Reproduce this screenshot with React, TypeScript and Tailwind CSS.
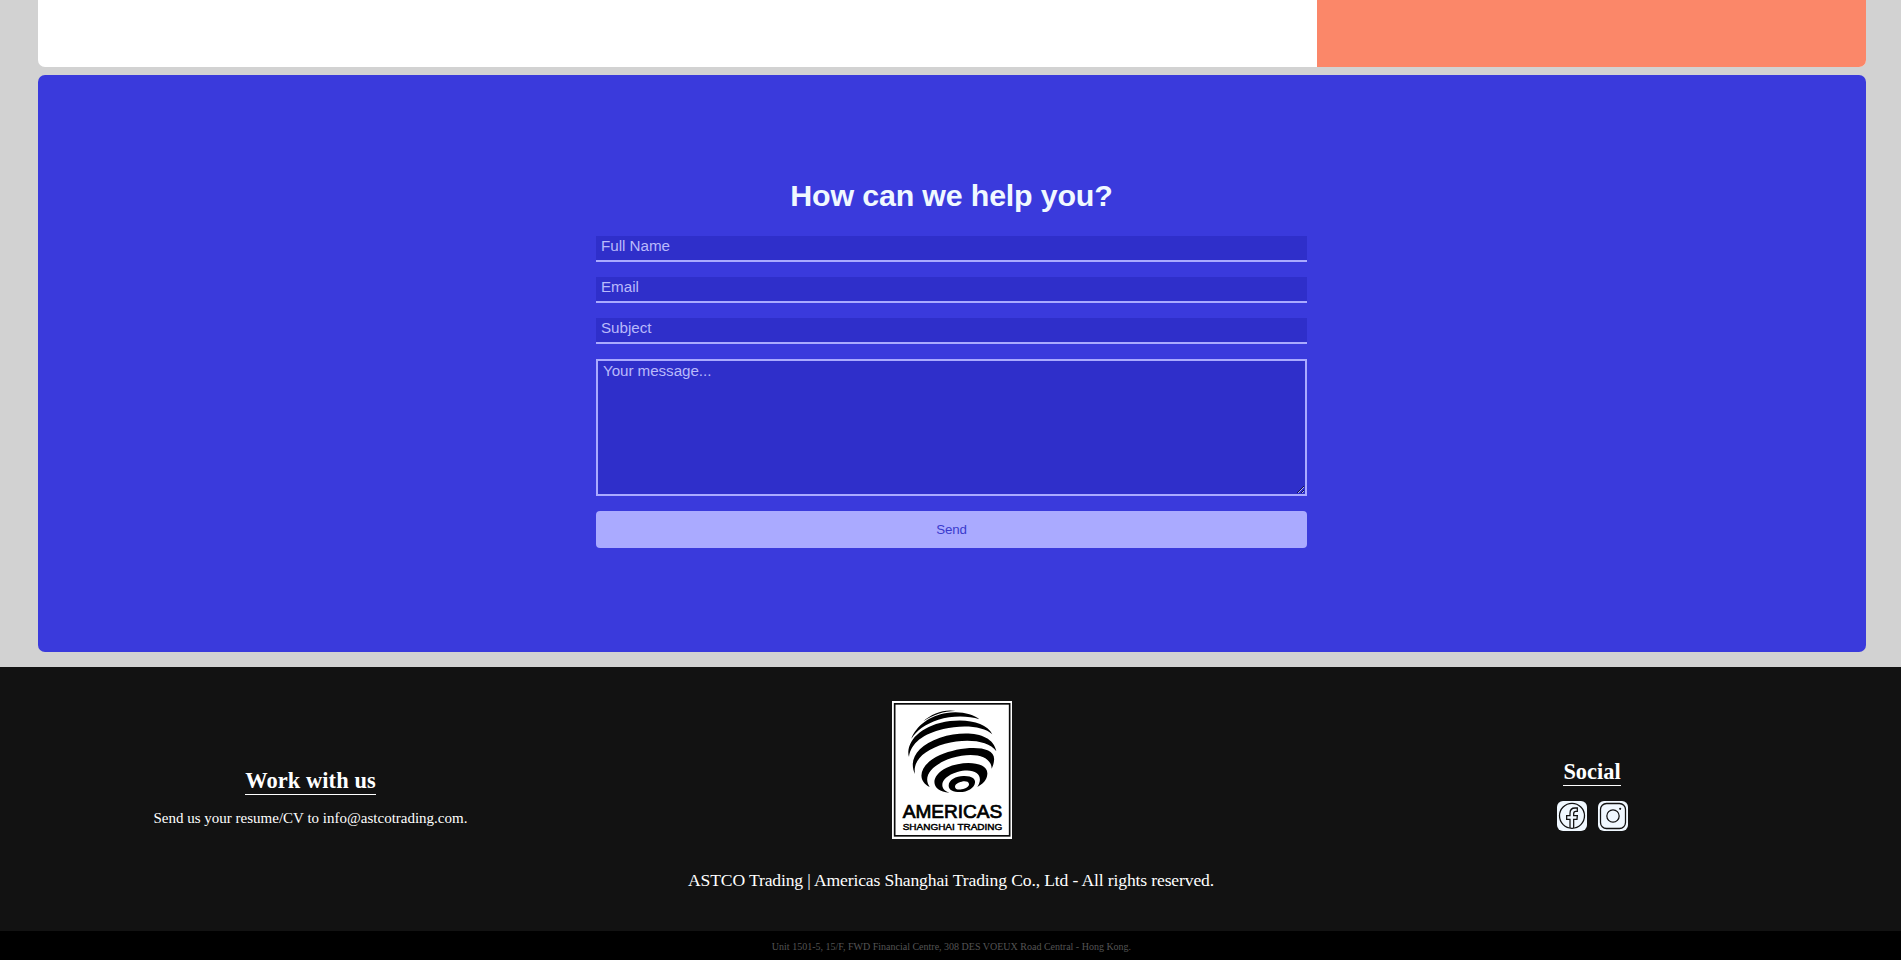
const fieldClass =
  "block h-[26px] w-full rounded-none border-b-2 border-[#aaaaff] bg-[#2f2fca] px-[5px] pt-0 pb-[6px] text-[15.2px] leading-[18px] tracking-[-0.03px] text-[#f0f8ff] placeholder:text-[#b9b9fb] outline-none";

function Logo() {
  return (
    <svg viewBox="36 33 360 414" className="h-[138px] w-[120px]" role="img">
      <rect x="36" y="33" width="360" height="414" fill="#fff" />
      <rect x="44" y="41.5" width="345" height="396" fill="none" stroke="#0a0a0a" strokeWidth="5" />
      <g fill="#000">
        <path d="M130 94C155 70 195 56 228 63C195 62 160 74 130 94Z" />
        <path d="M94 146C108 108 150 76 200 69C240 62 280 72 298 88C265 77 215 77 175 89C135 102 110 121 94 146Z" />
        <path d="M87 201C76 160 115 115 180 99C250 82 318 95 337 133C310 107 245 104 190 117C130 131 92 160 87 201Z" />
        <path d="M105 252C85 210 110 167 180 143C255 120 338 127 349 184C325 149 255 145 195 161C130 180 98 213 105 252Z" />
        <path d="M149 291C110 272 115 225 180 195C245 167 350 162 342 212C341 222 338 230 335 236C334 197 280 184 215 204C155 224 127 259 149 291Z" />
        <path d="M208 308C155 306 145 260 200 233C255 209 325 217 322 252C321 270 308 282 292 291C314 257 287 231 232 246C182 261 173 295 208 308Z" />
        <path fillRule="evenodd" d="M206 287C206 269 228 259 250 258C276 257 287 267 285 278C283 294 262 306 240 306C220 306 206 300 206 287ZM225 290C225 298 235 300 245 298C258 296 268 289 267 282C266 274 255 273 245 275C234 277 225 283 225 290Z" />
      </g>
      <text x="68" y="383" textLength="299" lengthAdjust="spacingAndGlyphs" fontSize="56" stroke="#000" strokeWidth="2.2" className="font-['Liberation_Sans',sans-serif]">
        AMERICAS
      </text>
      <text x="68" y="419" textLength="299" lengthAdjust="spacingAndGlyphs" fontSize="28" stroke="#000" strokeWidth="1.4" className="font-['Liberation_Sans',sans-serif]">
        SHANGHAI TRADING
      </text>
    </svg>
  );
}

function FacebookIcon() {
  return (
    <svg viewBox="0 0 90 90" className="size-[30px] rounded-[6px] bg-[#f0f8ff]" fill="none" stroke="#111" strokeWidth="3.8">
      <circle cx="45" cy="44.5" r="37.5" />
      <path d="M39 81V55H29V44H39V37C39 26 45 21 54 21H61V31H56C51 31 50 33 50 38V44H61L60 55H50V81" />
    </svg>
  );
}

function InstagramIcon() {
  return (
    <svg viewBox="0 0 90 90" className="size-[30px] rounded-[6px] bg-[#f0f8ff]" fill="none" stroke="#111" strokeWidth="3.8">
      <rect x="7.5" y="7.5" width="75" height="75" rx="18" />
      <circle cx="45" cy="45" r="18.5" />
      <circle cx="66.5" cy="23.5" r="3.2" fill="#111" stroke="none" />
    </svg>
  );
}

export default function App() {
  return (
    <div className="flex h-[960px] flex-col overflow-hidden bg-[#d2d2d2] font-['Liberation_Serif',serif]">
      <main className="flex h-[667px] flex-col gap-2 pr-[35px] pl-[38px]">
        <section className="flex h-[67px] overflow-hidden rounded-b-[7px] bg-white">
          <div className="flex-1" />
          <div className="w-[549px] bg-[#fb8769]" />
        </section>

        <section className="flex h-[577px] flex-col items-center rounded-[7px] bg-[#3a3adc] pt-[102px] pr-px font-['Liberation_Sans',sans-serif]">
          <h2 className="h-[59px] text-[30.4px] leading-[36px] font-bold tracking-[-0.18px] text-[#f0f8ff]">How can we help you?</h2>
          <form className="flex w-[711px] flex-col gap-[15px]">
            <input className={fieldClass} placeholder="Full Name" />
            <input className={fieldClass} placeholder="Email" />
            <input className={fieldClass} placeholder="Subject" />
            <textarea
              className="block h-[137px] w-full resize rounded-none border-2 border-[#aaaaff] bg-[#2f2fca] px-[5px] py-px text-[15.2px] leading-[17px] tracking-[-0.06px] text-[#f0f8ff] outline-none placeholder:text-[#b9b9fb]"
              placeholder="Your message..."
            />
            <button type="button" className="h-[37px] rounded-[4px] bg-[#aaaaff] text-[13.33px] tracking-[-0.2px] text-[#3a3acd]">
              Send
            </button>
          </form>
        </section>
      </main>

      <footer className="flex h-[264px] flex-col bg-[#121212] pl-px text-white">
        <div className="grid grid-cols-[619px_664px_616px] pt-[34px]">
          <div className="flex flex-col items-center pt-[67px]">
            <h3 className="border-b border-white pb-px text-[22.4px] leading-[25px] font-bold tracking-[0.1px]">Work with us</h3>
            <p className="mt-[14px] text-[15px] leading-[18px]">Send us your resume/CV to info@astcotrading.com.</p>
          </div>
          <div className="flex justify-center">
            <Logo />
          </div>
          <div className="flex flex-col items-center pt-[58px]">
            <h3 className="border-b border-white pb-px text-[22.4px] leading-[25px] font-bold">Social</h3>
            <div className="mt-[15px] flex gap-[11px]">
              <FacebookIcon />
              <InstagramIcon />
            </div>
          </div>
        </div>
        <p className="mt-[31px] text-center text-[17.6px] leading-[20px] tracking-[-0.14px]">
          ASTCO Trading | Americas Shanghai Trading Co., Ltd - All rights reserved.
        </p>
      </footer>

      <div className="flex h-[29px] justify-center bg-black pt-[9px] pl-[2px]">
        <p className="text-[10px] leading-[13px] text-[#545454]">
          Unit 1501-5, 15/F, FWD Financial Centre, 308 DES VOEUX Road Central - Hong Kong.
        </p>
      </div>
    </div>
  );
}
